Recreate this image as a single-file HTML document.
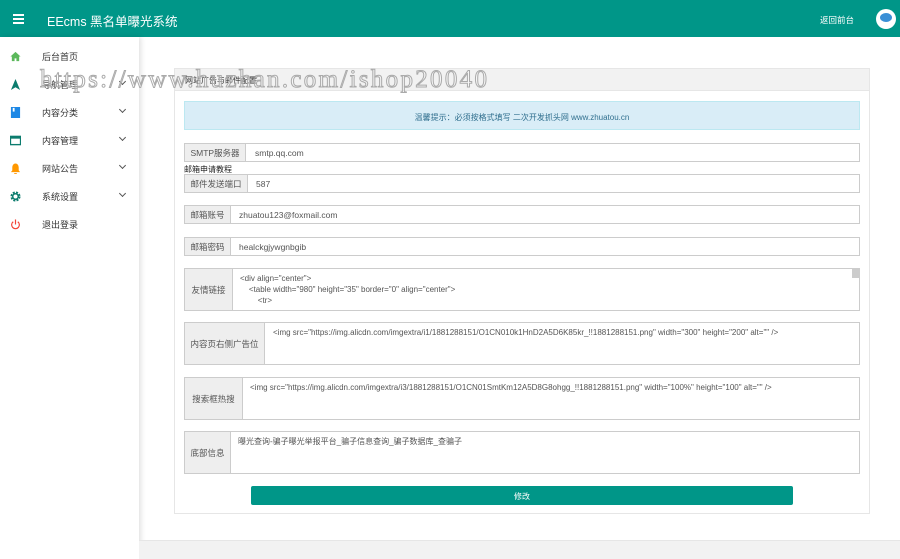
<!DOCTYPE html><html><head><meta charset="utf-8"><style>
*{box-sizing:border-box;margin:0;padding:0}
body{width:900px;height:559px;overflow:hidden;background:#fff;font-family:"Liberation Sans","Noto Sans CJK SC",sans-serif;font-size:8px;color:#555;position:relative}
.hd{position:absolute;left:0;top:0;width:900px;height:37px;background:#009688;color:#fff}
.hd .t{position:absolute;left:47px;top:11px;font-size:12.5px}
.hd .b{position:absolute;left:820px;top:14px;font-size:8.5px}
.ham{position:absolute;left:13px;top:14px;width:11px}
.ham i{display:block;height:1.5px;background:#fff;margin-bottom:2.5px}
.av{position:absolute;left:876px;top:9px;width:20px;height:20px;border-radius:50%;background:#fff}
.av:after{content:"";position:absolute;left:4px;top:4px;width:12px;height:9px;border-radius:50%;background:#3a8fd6}
.sb{position:absolute;left:0;top:37px;width:139px;height:522px;background:#fff;box-shadow:2px 0 5px rgba(0,0,0,.12)}
.it{position:absolute;left:0;height:20px;width:139px;font-size:9px;color:#333}
.it span{position:absolute;left:42px;top:4px}
.it .ic{position:absolute;left:10px;top:5px;width:11px;height:11px}
.it .ar{position:absolute;left:120px;top:5px;width:5px;height:5px;border-right:1.3px solid #555;border-bottom:1.3px solid #555;transform:rotate(45deg)}
.bot{position:absolute;left:139px;top:540px;width:761px;height:19px;background:#f2f2f2;border-top:1px solid #e6e6e6}
.card{position:absolute;left:174px;top:68px;width:696px;height:446px;border:1px solid #e6e6e6;background:#fff}
.ch{position:absolute;left:0;top:0;width:694px;height:22px;background:#f2f2f2;border-bottom:1px solid #e6e6e6;font-size:8px;color:#333;padding:6px 0 0 10px}
.al{position:absolute;left:184px;top:101px;width:676px;height:29px;background:#d9edf7;border:1px solid #bce8f1;color:#31708f;font-size:8px;text-align:center;padding-top:10px}
.row{position:absolute;left:184px;width:676px;border:1px solid #ccc;background:#fff;font-size:8.5px}
.row .l{position:absolute;left:0;top:0;bottom:0;background:#eee;border-right:1px solid #ccc;color:#555;display:flex;align-items:center;justify-content:center}
.row .v{position:absolute;top:4px;color:#555;white-space:nowrap}
.row .tv{position:absolute;top:4px;line-height:11px;color:#555;white-space:pre;font-size:8px}
.btn{position:absolute;left:251px;top:486px;width:542px;height:19px;background:#009688;color:#fff;text-align:center;font-size:8px;padding-top:5px;border-radius:2px}
.wm{position:absolute;left:40px;top:66px;font-family:"Liberation Serif",serif;font-size:25px;color:rgba(255,255,255,.3);-webkit-text-stroke:1px #aaa;letter-spacing:2.3px;white-space:nowrap}
.sc{position:absolute;left:852px;top:268px;width:7px;height:10px;background:#ccc}
</style></head><body>
<div class="hd"><div class="ham"><i></i><i></i><i></i></div><div class="t">EEcms 黑名单曝光系统</div><div class="b">返回前台</div><div class="av"></div></div>
<div class="sb">
<div class="it" style="top:9px"><svg class="ic" viewBox="0 0 12 12"><path d="M6 1L0.5 6H2v5h3V8h2v3h3V6h1.5z" fill="#5cb85c"/></svg><span>后台首页</span></div>
<div class="it" style="top:37px"><svg class="ic" viewBox="0 0 12 12"><path d="M6 0L11 12L6 9L1 12z" fill="#0c7c6e"/></svg><span>导航管理</span><b class="ar"></b></div>
<div class="it" style="top:65px"><svg class="ic" viewBox="0 0 12 12"><rect x="1" y="0" width="10" height="12" fill="#1e88e5"/><rect x="3" y="1" width="2" height="4" fill="#fff"/></svg><span>内容分类</span><b class="ar"></b></div>
<div class="it" style="top:93px"><svg class="ic" viewBox="0 0 12 12"><rect x="0.5" y="1.5" width="11" height="9" fill="none" stroke="#0c7c6e" stroke-width="1.5"/><rect x="0.5" y="1.5" width="11" height="2.5" fill="#0c7c6e"/></svg><span>内容管理</span><b class="ar"></b></div>
<div class="it" style="top:121px"><svg class="ic" viewBox="0 0 12 12"><path d="M6 0.5C3.5 0.5 2.5 3 2.5 5V8L1 10H11L9.5 8V5C9.5 3 8.5 0.5 6 0.5zM4.5 11a1.5 1.5 0 003 0z" fill="#ff9800"/></svg><span>网站公告</span><b class="ar"></b></div>
<div class="it" style="top:149px"><svg class="ic" viewBox="0 0 12 12"><circle cx="6" cy="6" r="4" fill="none" stroke="#0c7c6e" stroke-width="3" stroke-dasharray="2 1.2"/><circle cx="6" cy="6" r="3" fill="none" stroke="#0c7c6e" stroke-width="1.6"/></svg><span>系统设置</span><b class="ar"></b></div>
<div class="it" style="top:177px"><svg class="ic" viewBox="0 0 12 12"><path d="M3.5 3A4.2 4.2 0 1 0 8.5 3" fill="none" stroke="#f44336" stroke-width="1.3"/><path d="M6 0.5V6" stroke="#f44336" stroke-width="1.3"/></svg><span>退出登录</span></div>
</div>
<div class="bot"></div>
<div class="card"><div class="ch">网站广告与邮件配置</div></div>
<div class="al">温馨提示：必须按格式填写 二次开发抓头网 www.zhuatou.cn</div>
<div class="row" style="top:143px;height:19px"><div class="l" style="width:61px">SMTP服务器</div><div class="v" style="left:70px">smtp.qq.com</div></div>
<div style="position:absolute;left:184px;top:164px;font-size:8px;color:#222">邮箱申请教程</div>
<div class="row" style="top:174px;height:19px"><div class="l" style="width:63px">邮件发送端口</div><div class="v" style="left:71px">587</div></div>
<div class="row" style="top:205px;height:19px"><div class="l" style="width:46px">邮箱账号</div><div class="v" style="left:54px">zhuatou123@foxmail.com</div></div>
<div class="row" style="top:237px;height:19px"><div class="l" style="width:46px">邮箱密码</div><div class="v" style="left:54px">healckgjywgnbgib</div></div>
<div class="row" style="top:268px;height:43px"><div class="l" style="width:48px">友情链接</div><div class="tv" style="left:55px">&lt;div align="center"&gt;
    &lt;table width="980" height="35" border="0" align="center"&gt;
        &lt;tr&gt;</div></div>
<div class="sc"></div>
<div class="row" style="top:322px;height:43px"><div class="l" style="width:80px">内容页右侧广告位</div><div class="tv" style="left:88px">&lt;img src="https://img.alicdn.com/imgextra/i1/1881288151/O1CN010k1HnD2A5D6K85kr_!!1881288151.png" width="300" height="200" alt="" /&gt;</div></div>
<div class="row" style="top:377px;height:43px"><div class="l" style="width:58px">搜索框热搜</div><div class="tv" style="left:65px">&lt;img src="https://img.alicdn.com/imgextra/i3/1881288151/O1CN01SmtKm12A5D8G8ohgg_!!1881288151.png" width="100%" height="100" alt="" /&gt;</div></div>
<div class="row" style="top:431px;height:43px"><div class="l" style="width:46px">底部信息</div><div class="tv" style="left:53px">曝光查询-骗子曝光举报平台_骗子信息查询_骗子数据库_查骗子</div></div>
<div class="btn">修改</div>
<div class="wm">https://www.huzhan.com/ishop20040</div>
</body></html>
